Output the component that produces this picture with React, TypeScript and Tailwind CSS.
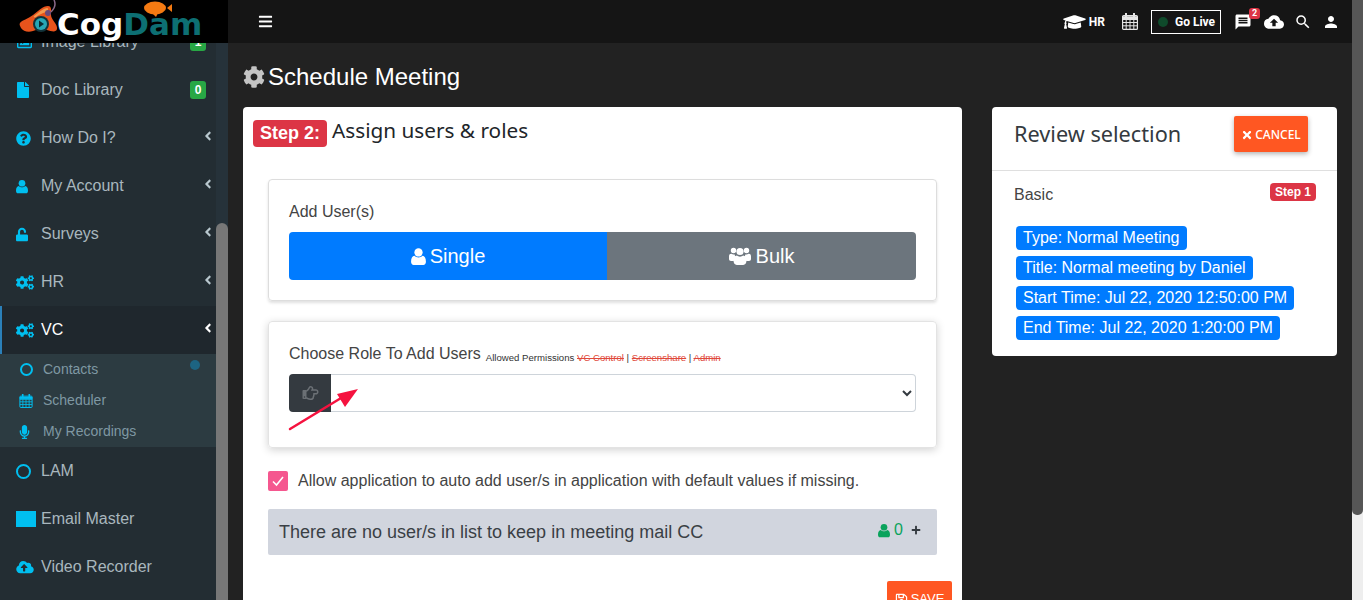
import type { ReactNode } from 'react';
import {
  FaAngleLeft,
  FaCloudUploadAlt,
  FaCog,
  FaCogs,
  FaFile,
  FaGraduationCap,
  FaMicrophone,
  FaPlus,
  FaQuestionCircle,
  FaRegHandPointRight,
  FaRegImage,
  FaRegSave,
  FaTimes,
  FaUnlock,
  FaBars,
} from 'react-icons/fa';
import { MdCloudUpload, MdMessage, MdPerson, MdSearch } from 'react-icons/md';

function UserGlyph({ className }: { className?: string }) {
  return (
    <svg viewBox="0 0 14 16" className={className} fill="currentColor">
      <circle cx="7" cy="4.2" r="3.9" />
      <path d="M3.2 7.4C4.2 8.4 5.5 9 7 9s2.8-.6 3.8-1.6c2 .3 3.2 2.2 3.2 5.6 0 1.9-1 3-2.4 3H2.4C1 16 0 14.900 0 13c0-3.400 1.200-5.300 3.200-5.600z" />
    </svg>
  );
}

function UsersGlyph({ className }: { className?: string }) {
  return (
    <svg viewBox="0 0 22 18" className={className} fill="currentColor">
      <circle cx="4.500" cy="3.500" r="2.700" />
      <circle cx="17.500" cy="3.500" r="2.700" />
      <circle cx="11" cy="4.500" r="3.600" />
      <path d="M0 9.500C0 7.500 1 6.500 2.500 6.700c.6.500 1.300.8 2.200.8.400 0 .8 0 1.100-.1-.1 1.300.5 2.400 1.500 3.200-1.300.6-2.200 1.700-2.500 3.400H2C.8 14 0 13.200 0 12zM22 9.500c0-2-1-3-2.500-2.800-.6.500-1.300.8-2.200.8-.4 0-.8 0-1.100-.1.100 1.300-.5 2.400-1.500 3.200 1.300.6 2.200 1.700 2.500 3.400H20c1.200 0 2-.8 2-2z" />
      <path d="M7.800 8.600c.8.700 1.900 1.100 3.200 1.100s2.400-.4 3.200-1.100c2.200.2 3.300 2 3.300 5 0 2.500-1.300 4.400-3.300 4.400H7.800c-2 0-3.300-1.900-3.300-4.400 0-3 1.100-4.800 3.300-5z" />
    </svg>
  );
}

// fa4 style calendar, open cells instead of the solid fa5 one
function CalendarGlyph({ className }: { className?: string }) {
  return (
    <svg viewBox="0 0 16 17" className={className} fill="none" stroke="currentColor">
      <rect x="0.600" y="2.600" width="14.800" height="13.800" rx="1" strokeWidth="1.200" />
      <path d="M0.600 6.500h14.800M0.600 9.500h14.800M0.600 12.800h14.800M4.200 6.500v10M8 6.500v10M11.800 6.500v10" strokeWidth="1" />
      <path d="M4 0.500v3.500M12 0.500v3.500" strokeWidth="2" strokeLinecap="round" />
      <path d="M0.600 3.500h14.800v2.500H0.600z" fill="currentColor" strokeWidth="0.500" />
    </svg>
  );
}

function MenuRow({
  icon,
  label,
  badge,
  arrow,
}: {
  icon: ReactNode;
  label: string;
  badge?: string;
  arrow?: boolean;
}) {
  return (
    <div className="flex h-12 items-center pl-4 pr-px text-[16px] text-[#a9b7be]">
      <span className="flex w-[25px] shrink-0 items-center text-[#00bff0]">{icon}</span>
      <span className="flex-1">{label}</span>
      {badge && (
        <span className="mr-[9px] flex h-[18px] w-4 items-center justify-center rounded-[3px] bg-[#28a745] text-[12px] font-bold text-white">
          {badge}
        </span>
      )}
      {arrow && <FaAngleLeft className="mb-1 h-[14px] w-[14px] text-[#b8c7ce]" />}
    </div>
  );
}

function SubRow({ icon, label }: { icon: ReactNode; label: string }) {
  return (
    <div className="flex h-[31px] items-center pl-[19px] text-[14px] text-[#7f98a3]">
      <span className="flex w-6 shrink-0 items-center text-[#00bff0]">{icon}</span>
      <span>{label}</span>
    </div>
  );
}

function Sidebar() {
  return (
    <aside className="-mt-[25px] flex w-[228px] shrink-0 bg-[#232d33]">
      <nav className="w-[216px]">
        <MenuRow icon={<FaRegImage className="h-[15px] w-[17px]" />} label="Image Library" badge="1" />
        <MenuRow icon={<FaFile className="h-[16px] w-[14px]" />} label="Doc Library" badge="0" />
        <MenuRow icon={<FaQuestionCircle className="h-[15px] w-[15px]" />} label="How Do I?" arrow />
        <MenuRow icon={<UserGlyph className="h-[15px] w-[12px]" />} label="My Account" arrow />
        <MenuRow icon={<FaUnlock className="h-[15px] w-[12px]" />} label="Surveys" arrow />
        <MenuRow icon={<FaCogs className="h-[15px] w-[18px]" />} label="HR" arrow />
        <div className="flex h-12 items-center border-l-2 border-[#2b80b9] bg-[#1f272d] pl-[14px] pr-px text-[16px] text-white">
          <span className="flex w-[25px] shrink-0 items-center text-[#00bff0]">
            <FaCogs className="h-[15px] w-[18px]" />
          </span>
          <span className="flex-1">VC</span>
          <FaAngleLeft className="mb-1 h-[14px] w-[14px] text-white" />
        </div>
        <div className="relative bg-[#2c3b41]">
          <span className="absolute right-[16px] top-[6px] h-[10px] w-[10px] rounded-full bg-[#1d6482]" />
          <SubRow icon={<span className="ml-px block h-[13px] w-[13px] rounded-full border-[2.5px] border-[#00bff0]" />} label="Contacts" />
          <SubRow icon={<CalendarGlyph className="h-[14px] w-[14px]" />} label="Scheduler" />
          <SubRow icon={<FaMicrophone className="h-[14px] w-[11px]" />} label="My Recordings" />
        </div>
        <MenuRow
          icon={<span className="block h-[15px] w-[15px] rounded-full border-[2.5px] border-[#00bff0]" />}
          label="LAM"
        />
        <div className="flex h-12 items-center pl-4 text-[16px] text-[#a9b7be]">
          <span className="h-4 w-5 shrink-0 bg-[#00bff0]" />
          <span className="ml-[5px]">Email Master</span>
        </div>
        <MenuRow icon={<FaCloudUploadAlt className="h-[14px] w-[18px]" />} label="Video Recorder" />
      </nav>
      <div className="w-3 bg-[#26323a] pt-[205px]">
        <div className="h-full rounded-t-[6px] bg-[#777777]" />
      </div>
    </aside>
  );
}

function TopBar() {
  return (
    <header className="relative z-10 flex h-[43px] shrink-0 items-center bg-[#151515] text-white">
      <div className="relative h-[43px] w-[228px] shrink-0 overflow-hidden bg-black">
        <svg viewBox="0 0 228 43" className="absolute inset-0 h-[43px] w-[228px]">
          <path d="M54 0c2 4 1 8-3 12" stroke="#8a6a8a" strokeWidth="1.500" fill="none" />
          <path
            d="M20 23c2-3 8-4 13-8 5-4 10-9 15-9 4 0 3 5 3 9 0 5 7 9 6 14-1 4-6 2-10 1-5-1-9-1-14 1-5 2-10 0-12-3-1-2-2-4-1-5z"
            fill="#e8531c"
          />
          <path d="M34 16c4-3 8-7 13-8 2 0 1 3-1 4-4 1-7 3-10 5-1 1-3 0-2-1z" fill="#f39a4e" />
          <circle cx="41" cy="24" r="8" fill="#12333a" />
          <circle cx="41" cy="24" r="6" fill="#27a7b5" />
          <path d="M39 20.500l5 3.500-5 3.500z" fill="#0b2a30" />
          <circle cx="48" cy="13" r="3" fill="#6b4a7a" />
          <ellipse cx="155" cy="8" rx="11" ry="6.500" fill="#f47a12" />
          <path d="M152 13l4 4 2-4z" fill="#f47a12" />
          <path d="M167 8l5-4v8z" fill="#f47a12" />
        </svg>
        <div className="relative flex h-full items-center pl-[57px] pt-[5px] font-['DejaVu_Sans',sans-serif] text-[31px] font-bold leading-none">
          <span className="text-white">Cog</span>
          <span className="text-[#0d6f73]">Dam</span>
        </div>
      </div>
      <FaBars className="ml-[30px] h-[15px] w-[15px]" />
      <div className="ml-auto flex items-center pr-[12px] font-['Roboto',sans-serif] text-[12px] font-bold">
        <FaGraduationCap className="h-[18px] w-[23px]" />
        <span className="ml-[3px]">HR</span>
        <CalendarGlyph className="ml-[17px] h-[17px] w-[16px] text-[#e6e6e6]" />
        <div className="ml-[13px] flex h-[24px] w-[70px] items-center border border-white pl-[6px]">
          <span className="h-[10px] w-[10px] rounded-full bg-[#0f4a2b]" />
          <span className="ml-[7px]">Go Live</span>
        </div>
        <div className="relative ml-[13px]">
          <MdMessage className="h-[18px] w-[18px]" />
          <span className="absolute -right-[8px] -top-[5px] flex h-[11px] w-[11px] items-center justify-center rounded-[3px] bg-[#dc3545] text-[9px] leading-none">
            2
          </span>
        </div>
        <MdCloudUpload className="ml-[12px] h-[20px] w-[20px]" />
        <MdSearch className="ml-[10px] h-[18px] w-[18px]" />
        <MdPerson className="ml-[10px] h-[18px] w-[18px]" />
      </div>
    </header>
  );
}

function AssignCard() {
  return (
    <section className="relative w-[719px] shrink-0 rounded-t-[4px] bg-white pb-8 pl-[25px] pr-[25px] pt-[13px]">
      <div className="-ml-[15px] flex h-[27px] items-center">
        <span className="flex h-[27px] w-[74px] items-center justify-center rounded-[4px] bg-[#dc3545] text-[18px] font-bold text-white">
          Step 2:
        </span>
        <span className="ml-[5px] -mt-[5px] font-['Noto_Sans',sans-serif] text-[20.750px] text-[#212529]">
          Assign users &amp; roles
        </span>
      </div>

      <div className="mt-[32px] h-[122px] rounded-[4px] border border-[#dddddd] px-5 pt-[23px] shadow-[0_2px_3px_rgba(0,0,0,0.12)]">
        <div className="h-[18px] text-[16px] leading-[18px] text-[#444444]">Add User(s)</div>
        <div className="mt-[11px] flex h-12 overflow-hidden rounded-[4px] text-[20px] text-white">
          <div className="flex w-[318px] items-center justify-center gap-[4px] bg-[#007bff]">
            <UserGlyph className="h-[17px] w-[15px]" />
            Single
          </div>
          <div className="flex flex-1 items-center justify-center gap-[5px] bg-[#6c757d]">
            <UsersGlyph className="h-[18px] w-[22px]" />
            Bulk
          </div>
        </div>
      </div>

      <div className="relative mt-[20px] h-[127px] rounded-[4px] border border-[#e3e3e3] px-5 pt-[22px] shadow-[0_2px_8px_rgba(0,0,0,0.18)]">
        <div className="flex h-[20px] items-baseline whitespace-nowrap text-[16px] leading-[20px] text-[#444444]">
          Choose Role To Add Users
          <span className="relative top-[2px] ml-[5px] text-[9.600px] leading-none text-[#333333]">
            Allowed Permissions <span className="text-[#e0483a] line-through">VC Control</span> |{' '}
            <span className="text-[#e0483a] line-through">Screenshare</span> |{' '}
            <span className="text-[#e0483a] line-through">Admin</span>
          </span>
        </div>
        <div className="mt-[10px] flex h-[38px]">
          <div className="flex w-[42px] items-center justify-center rounded-l-[4px] bg-[#343a40] text-[#6b7075]">
            <FaRegHandPointRight className="h-[16px] w-[17px]" />
          </div>
          <select
            aria-label="Role"
            className="h-full flex-1 rounded-r-[4px] border border-l-0 border-[#ced4da] bg-white text-[16px] text-[#343a40]"
          />
        </div>
        <svg className="absolute left-[19px] top-[58px] h-[52px] w-[74px]" viewBox="0 0 74 52">
          <path d="M2 49L58 15" stroke="#f5123f" strokeWidth="2.500" strokeLinecap="round" />
          <path d="M70 9L49 14l8 13z" fill="#f5123f" />
        </svg>
      </div>

      <div className="mt-[23px] flex h-[20px] items-center">
        <span className="flex h-[20px] w-[20px] items-center justify-center rounded-[2px] bg-[#f5578f] text-white">
          <svg viewBox="0 0 14 14" className="h-[14px] w-[14px]" fill="none" stroke="currentColor" strokeWidth="1.600">
            <path d="M2 7.500l3.500 3.500L12 3" />
          </svg>
        </span>
        <span className="ml-[10px] text-[16px] text-[#444444]">
          Allow application to auto add user/s in application with default values if missing.
        </span>
      </div>

      <div className="mt-[18px] flex h-[46px] items-center rounded-[2px] bg-[#d1d5de] pl-[11px] pr-[16px] text-[18px] text-[#3a3f45]">
        <span className="flex-1">There are no user/s in list to keep in meeting mail CC</span>
        <span className="-mt-[4px] flex items-center text-[16px] text-[#0aa35c]">
          <UserGlyph className="h-[15px] w-[12px]" />
          <span className="ml-[4px]">0</span>
          <FaPlus className="ml-[8px] h-[10px] w-[10px] text-[#343a40]" />
        </span>
      </div>

      <div className="mt-[26px] flex justify-end">
        <div className="-mr-[15px] flex h-9 w-[65px] items-center justify-center gap-[3px] rounded-[2px] bg-[#ff5722] text-[13px] text-white">
          <FaRegSave className="h-[13px] w-[13px]" />
          SAVE
        </div>
      </div>
    </section>
  );
}

function ReviewCard() {
  const pills = [
    'Type: Normal Meeting',
    'Title: Normal meeting by Daniel',
    'Start Time: Jul 22, 2020 12:50:00 PM',
    'End Time: Jul 22, 2020 1:20:00 PM',
  ];
  return (
    <section className="h-[249px] w-[345px] shrink-0 rounded-[4px] bg-white">
      <div className="flex h-[64px] items-start border-b border-[#dfdfdf] pl-[22px] pr-[29px] pt-[9px]">
        <span className="mt-px flex-1 font-['Noto_Sans',sans-serif] text-[21.700px] leading-[34px] text-[#343a40]">
          Review selection
        </span>
        <div className="flex h-9 w-[74px] items-center justify-center gap-[2px] rounded-[2px] bg-[#ff5722] pt-px font-['Noto_Sans',sans-serif] text-[12px] font-medium text-white shadow-[0_2px_5px_rgba(0,0,0,0.3)]">
          <FaTimes className="h-[12px] w-[12px]" />
          CANCEL
        </div>
      </div>
      <div className="flex items-start pl-[22px] pr-[21px] pt-[12px]">
        <span className="mt-[3px] flex-1 text-[16px] leading-[18px] text-[#444444]">Basic</span>
        <span className="flex h-[18px] w-[46px] items-center justify-center rounded-[4px] bg-[#dc3545] text-[12px] font-bold text-white">
          Step 1
        </span>
      </div>
      <div className="mt-[22px] flex flex-col items-start gap-[6px] pl-6">
        {pills.map((pill) => (
          <span key={pill} className="flex h-6 items-center rounded-[4px] bg-[#007bff] px-[7px] text-[16px] text-white">
            {pill}
          </span>
        ))}
      </div>
    </section>
  );
}

export default function App() {
  return (
    <div className="flex h-[600px] w-full overflow-hidden bg-[#222222] font-['Liberation_Sans',sans-serif]">
      <div className="flex min-w-0 flex-1 flex-col overflow-hidden">
        <TopBar />
        <div className="flex min-h-0 flex-1">
          <Sidebar />
          <main className="min-w-0 flex-1 overflow-hidden pl-[15px] pr-[15px]">
            <h1 className="flex h-[64px] items-center pt-[4px] text-[24px] text-white">
              <FaCog className="mr-[3px] h-[22px] w-[22px] text-[#c4c4c4]" />
              Schedule Meeting
            </h1>
            <div className="flex items-start gap-[30px]">
              <AssignCard />
              <ReviewCard />
            </div>
          </main>
        </div>
      </div>
      <div className="flex w-[11px] shrink-0 flex-col bg-[#eeeeee]">
        <div className="h-[515px] rounded-b-[5px] bg-[#565656]" />
      </div>
    </div>
  );
}
